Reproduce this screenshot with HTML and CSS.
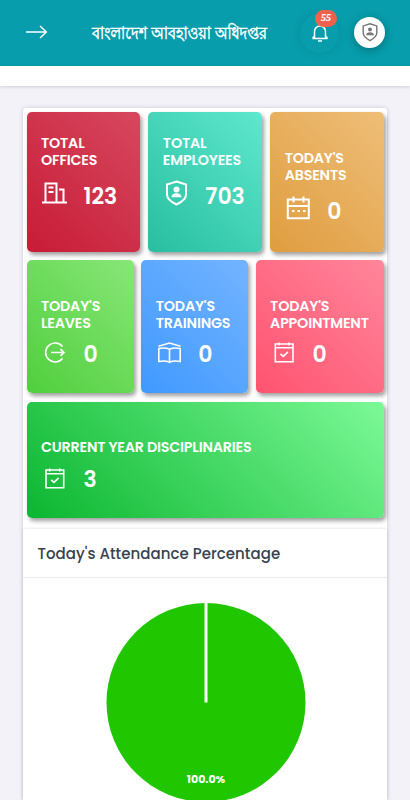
FILE: index.html
```html
<!DOCTYPE html>
<html lang="bn">
<head>
  <meta charset="utf-8">
  <title>Dashboard</title>
  <link rel="stylesheet" href="styles.css">
</head>
<body>
<header class="topbar">
  <svg class="menu-arrow" viewBox="0 0 22 14" width="22" height="14"><path d="M0 7h20M14 1l6.3 6L14 13"/></svg>
  <h1 class="org-name">বাংলাদেশ আবহাওয়া অধিদপ্তর</h1>
  <div class="bell">
    <svg viewBox="0 0 18 20" width="18" height="20"><path d="M1.500 15.500h15M3.500 15V8.500a5.500 5.500 0 0 1 11 0V15M1.500 15.500l2-2.500M16.500 15.500l-2-2.500M9 1.500v2M7 18h4"/></svg>
    <span class="badge">55</span>
  </div>
  <div class="avatar">
    <svg viewBox="0 0 28 28" width="20" height="20"><path class="line" d="M14 2.500l9.500 3v10c0 5-4 7.500-9.500 10.500C8.500 23 4.500 20.500 4.500 15.500v-10z"/><circle cx="14" cy="10.500" r="2.800"/><path d="M8.500 18.500c0-3 2.500-4 5.500-4s5.500 1 5.500 4z"/></svg>
  </div>
</header>
<div class="subbar"></div>

<main class="content">
  <section class="stats">
    <div class="row row-top">
      <div class="stat red">
        <h2>TOTAL<br>OFFICES</h2>
        <div class="value">
          <svg viewBox="0 0 28 28"><path d="M1 23.500h25M4.500 23V4.500h11V23M18 10.500h4.500V23M7.500 8.500h5M7.500 13h5"/></svg>
          <span>123</span>
        </div>
      </div>
      <div class="stat teal">
        <h2>TOTAL<br>EMPLOYEES</h2>
        <div class="value">
          <svg viewBox="0 0 28 28"><path d="M13.500 2.500l9.500 3v10c0 5-4 7.500-9.500 10C8 23 4 20.500 4 15.500v-10z"/><circle class="fill" cx="13.500" cy="10.500" r="3"/><path class="fill" d="M8.500 18.300c0-2.600 2.500-4 5-4s5 1.400 5 4z"/></svg>
          <span>703</span>
        </div>
      </div>
      <div class="stat orange">
        <h2>TODAY'S<br>ABSENTS</h2>
        <div class="value">
          <svg viewBox="0 0 28 28"><path d="M2.800 5.500h21v18.700h-21zM2.800 12h21M8.500 2.500v6M18.500 2.500v6M7 17h2.500M12.500 17H15M18 17h2.500"/></svg>
          <span>0</span>
        </div>
      </div>
    </div>
    <div class="row row-middle">
      <div class="stat green">
        <h2>TODAY'S<br>LEAVES</h2>
        <div class="value">
          <svg class="thin" viewBox="0 0 28 28"><path d="M21.500 7.500a9.500 9.500 0 1 0 0 12M10 13.500h12M19.500 10.200l3.500 3.300-3.500 3.300"/></svg>
          <span>0</span>
        </div>
      </div>
      <div class="stat blue">
        <h2>TODAY'S<br>TRAININGS</h2>
        <div class="value">
          <svg class="thin" viewBox="0 0 28 28"><path d="M2.500 7.300L13.500 4l11 3.300M2.800 9.500c4-.8 7.500-.8 10.700.8 3.200-1.600 6.700-1.600 10.700-.8V22.500c-4-.8-7.500-.8-10.700.8-3.200-1.600-6.700-1.600-10.700-.8zM13.500 10.500V23"/></svg>
          <span>0</span>
        </div>
      </div>
      <div class="stat pink">
        <h2>TODAY'S<br>APPOINTMENT</h2>
        <div class="value">
          <svg class="thin" viewBox="0 0 28 28"><path d="M5.300 5H23v17.700H5.300zM5.300 8.800H23M9 3.500V6.500M19 3.500V6.500M10.500 14.800l2.700 2.500 4.800-4.500"/></svg>
          <span>0</span>
        </div>
      </div>
    </div>
    <div class="row row-bottom">
      <div class="stat deep-green">
        <h2>CURRENT YEAR DISCIPLINARIES</h2>
        <div class="value">
          <svg class="thin" viewBox="0 0 28 28"><path d="M5 5h17.700v17.700H5zM5 8.800h17.700M8.700 3.500V6.500M18.700 3.500V6.500M10.200 14.800l2.700 2.500 4.800-4.500"/></svg>
          <span>3</span>
        </div>
      </div>
    </div>
  </section>

  <section class="attendance">
    <h3>Today's Attendance Percentage</h3>
    <svg class="pie" viewBox="0 0 200 197" width="200" height="197">
      <circle cx="100" cy="99.500" r="99.500"/>
      <path d="M100 0v99.500"/>
      <text x="100" y="179.500" text-anchor="middle">100.0%</text>
    </svg>
  </section>
</main>
</body>
</html>
```
FILE: styles.css
```css
* { margin: 0; padding: 0; box-sizing: border-box; }
body { height: 800px; overflow: hidden; background: #f3f2f9; font-family: Poppins, Inter, sans-serif; }
svg { display: block; fill: none; flex: none; }

.topbar { height: 66px; padding: 0 25px 2px 26px; display: flex; align-items: center; background: #079dac; }
.menu-arrow { stroke: #fff; stroke-width: 1.5; }
.org-name { width: 175px; margin: 5px 0 0 44px; color: #fff; font-family: "Lohit Bengali", "Mukti Narrow", FreeSans, "Noto Serif Bengali", sans-serif; font-size: 16px; line-height: 24px; font-weight: 600; white-space: nowrap; transform: scaleX(.9); transform-origin: left; -webkit-text-stroke: .5px #fff; }
.bell { position: relative; width: 39px; height: 39px; margin-left: 33px; margin-top: 2px; display: flex; align-items: center; justify-content: center; border-radius: 50%; box-shadow: 0 0 8px rgba(0, 60, 80, .16); }
.bell svg { stroke: #fff; stroke-width: 1.5; }
.badge { position: absolute; top: -4px; left: 15px; width: 22px; height: 17px; border-radius: 9px; background: #f0624d; color: #fff; font: italic bold 10px/16px "Liberation Serif", serif; text-align: center; -webkit-text-stroke: .2px #fff; }
.avatar { width: 31px; height: 31px; margin-left: 15px; display: flex; align-items: center; justify-content: center; border-radius: 50%; background: #fff; box-shadow: 0 2px 10px rgba(0, 0, 0, .3); }
.avatar svg { fill: #777; }
.avatar .line { fill: none; stroke: #777; stroke-width: 2; }
.subbar { height: 20px; background: #fff; box-shadow: 0 1px 3px rgba(60, 60, 90, .2); }

.content { margin: 22px 23px 0; background: #fff; border-radius: 3px 3px 0 0; box-shadow: 0 0 4px rgba(60, 60, 90, .22); }
.stats { padding: 4px 3px 11px 3.5px; display: flex; flex-direction: column; gap: 8.5px; }
.row { display: grid; gap: 8px; }
.row-top { height: 139.5px; grid-template-columns: repeat(3, 1fr); }
.row-middle { height: 133px; grid-template-columns: 107.5px 107px 1fr; gap: 7.3px; }
.row-bottom { height: 116.5px; }
.stat { padding: 23px 0 0 14.5px; border-radius: 5px; color: #fff; box-shadow: 2px 3px 4px rgba(0, 0, 0, .38); }
.row-top .orange { padding-top: 38px; }
.row-middle .stat { padding-top: 38px; }
.row-bottom .stat { padding-top: 37px; }
.stat h2 { font-size: 14.3px; line-height: 17px; font-weight: 600; letter-spacing: -.2px; white-space: nowrap; }
.value { display: flex; align-items: center; gap: 14.5px; margin-top: 9px; }
.row-middle .value { margin-top: 7px; }
.value svg { width: 28px; height: 28px; stroke: #fff; stroke-width: 2; }
.value svg.thin { stroke-width: 1.6; }
.value .fill { fill: #fff; stroke: none; }
.value span { padding-top: 3px; font-size: 22px; line-height: 24px; font-weight: 600; }
.row-top .value span { padding-top: 7px; }
.row-top .value svg { margin-bottom: 2px; }

.red { background: linear-gradient(45deg, #c81b37, #d6485e); }
.teal { background: linear-gradient(45deg, #28bea0, #5ee8ce); }
.orange { background: linear-gradient(45deg, #df9d3f, #efbe78); }
.green { background: linear-gradient(45deg, #50cf3d, #88e678); }
.blue { background: linear-gradient(45deg, #4099ff, #73b4ff); }
.pink { background: linear-gradient(45deg, #ff5370, #ff869a); }
.deep-green { background: linear-gradient(45deg, #0bb630, #7cf997); }

.attendance { height: 271px; border-radius: 3px 3px 0 0; box-shadow: 0 0 3px rgba(60, 60, 90, .2); }
.attendance h3 { height: 49px; padding-left: 14.5px; border-bottom: 1px solid #ececef; color: #37424e; font-size: 15px; line-height: 49px; font-weight: 500; letter-spacing: .04px; white-space: nowrap; }
.pie { margin: 25px 0 0 83px; }
.pie circle { fill: #20c600; }
.pie path { stroke: #fff; stroke-width: 3; }
.pie text { fill: #fff; font-size: 11px; font-weight: 700; }
```
